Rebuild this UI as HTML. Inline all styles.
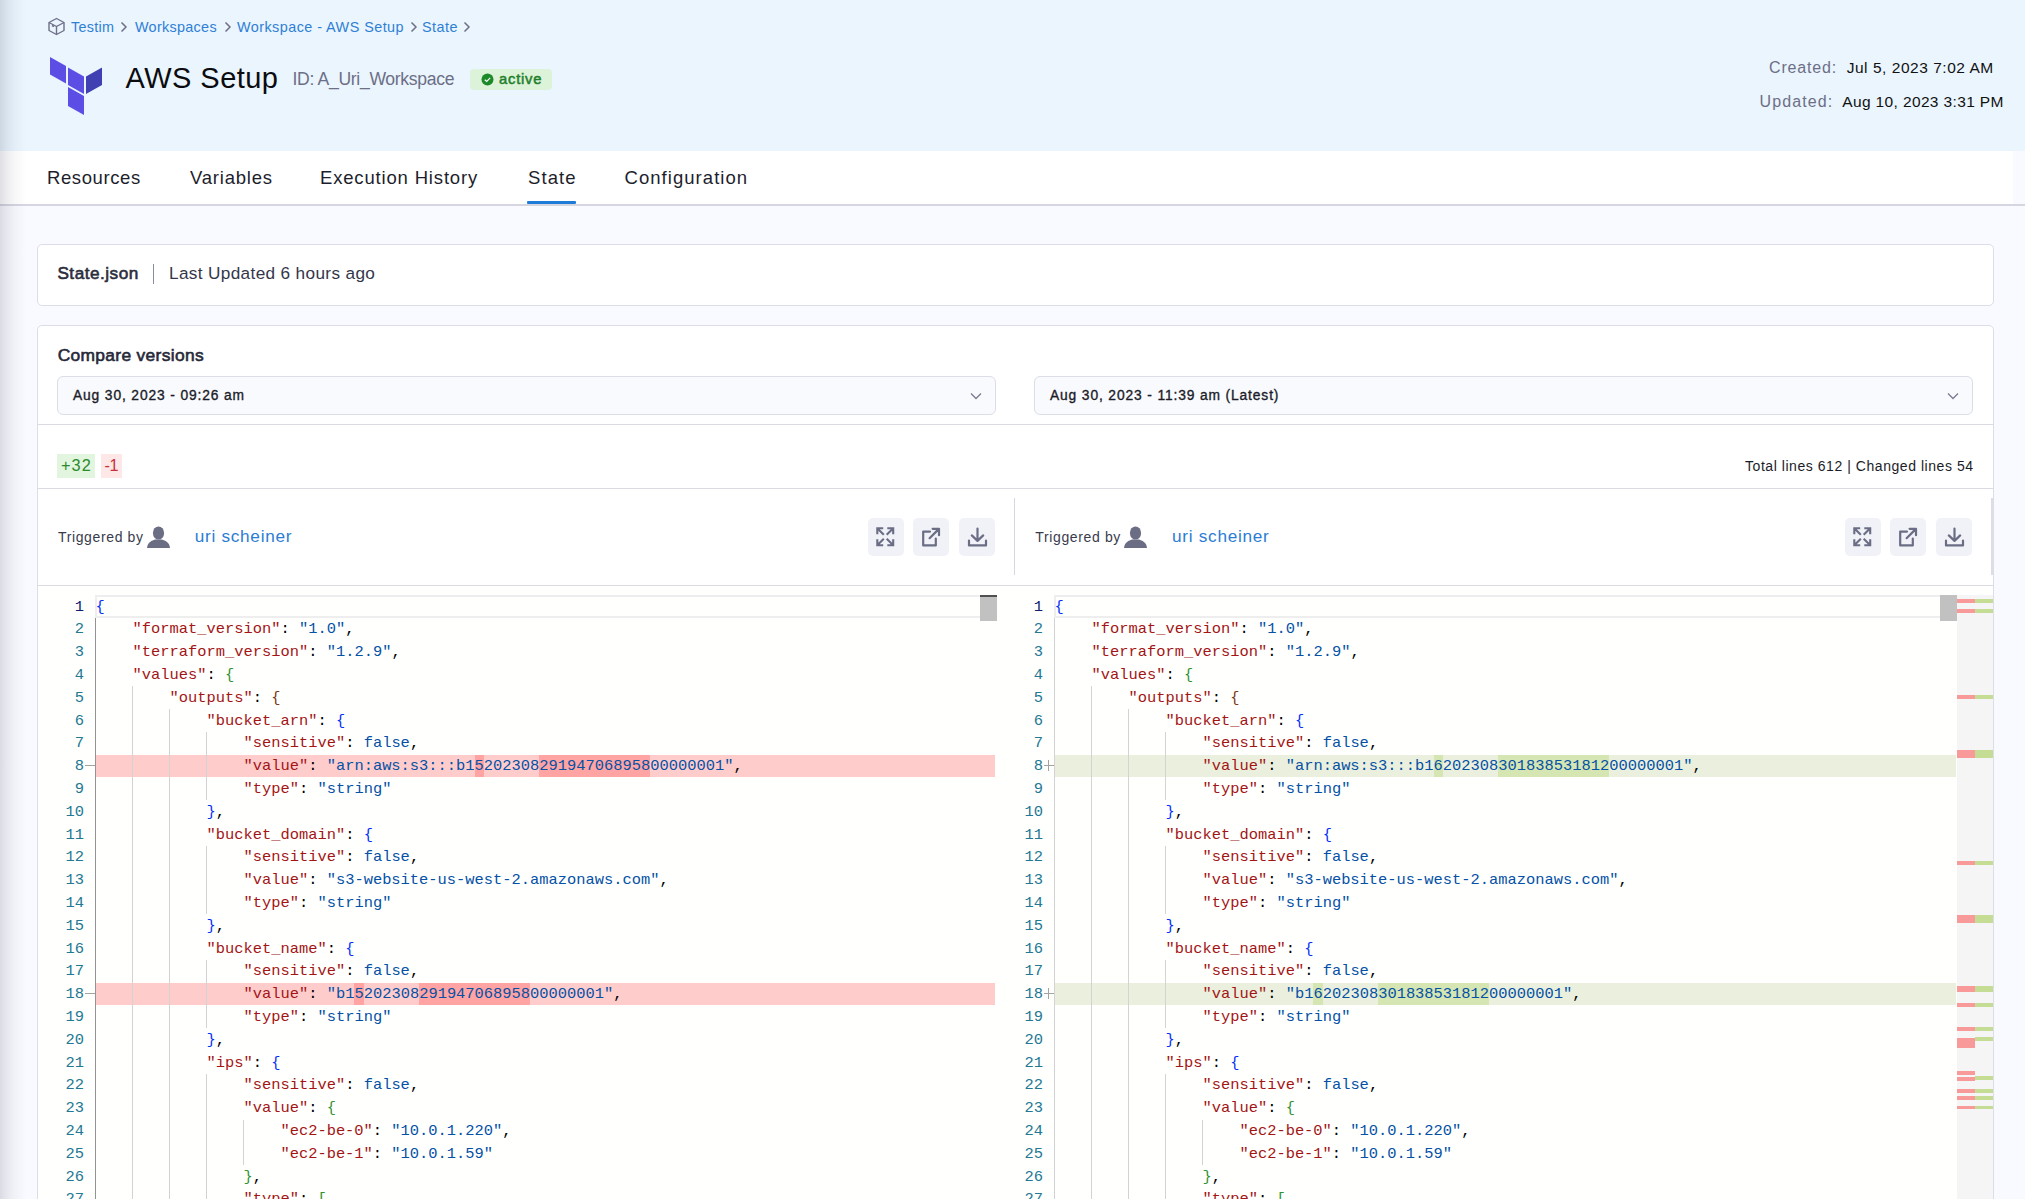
<!DOCTYPE html>
<html><head><meta charset="utf-8"><style>
*{box-sizing:border-box}
html,body{margin:0;padding:0;width:2025px;height:1199px;overflow:hidden;background:#F9FAFF;font-family:"Liberation Sans",sans-serif;position:relative}
.t{position:absolute;white-space:nowrap;line-height:1}
.abs{position:absolute}
#hdr{position:absolute;left:0;top:0;width:2025px;height:151px;background:#EAF5FE}
#tabs{position:absolute;left:0;top:151px;width:2013px;height:53px;background:#fff}
#tabline{position:absolute;left:0;top:204px;width:2025px;height:2px;background:#D6D6E2}
#shadow{position:absolute;left:0;top:0;width:26px;height:1199px;background:linear-gradient(to right,rgba(40,45,70,0.15),rgba(40,45,70,0.09) 25%,rgba(40,45,70,0.04) 55%,rgba(40,45,70,0) 100%)}
.card{position:absolute;background:#fff;border:1px solid #DDDDEA;border-radius:5px}
.hr{position:absolute;height:1px;background:#D9DAE2}
.sel{position:absolute;background:#F9FAFE;border:1.5px solid #DCDDE6;border-radius:6px}
.btn{position:absolute;width:36px;height:38px;background:#F1F2F8;border-radius:5px}
.ln{position:absolute;width:46px;text-align:right;font-family:"Liberation Mono",monospace;font-size:15.42px;line-height:22.8px;color:#237893;white-space:nowrap}
.ln.cur{color:#0B216F}
.cl{position:absolute;font-family:"Liberation Mono",monospace;font-size:15.42px;line-height:22.8px;white-space:pre;color:#000}
.mk{position:absolute;width:11px;text-align:center;font-family:"Liberation Mono",monospace;font-size:15px;line-height:22.8px;color:#777}
.k{color:#A31515}.s{color:#0451A5}.kw{color:#0451A5}.p{color:#000}
.b1{color:#0431FA}.b2{color:#319331}.b3{color:#7B3814}
.del{position:absolute;height:22.8px;background:#FFCCCC}
.ins{position:absolute;height:22.8px;background:#EAF0DD}
.del ~ .cl .hl{}
.ig{position:absolute;width:1px;background:#D3D3D3}
.ig.act{background:#939393}
.curline{position:absolute;height:22.8px;border-top:2px solid #EEEEEE;border-bottom:2px solid #EEEEEE;border-left:2px solid #EEEEEE}
.slider{position:absolute;width:17px;height:26px;background:#C1C1C1}
.slider.dk{border-top:2px solid #505050}

.hl{padding:2.2px 0 2.17px}
.L .hl{background:#FFA3A3}
.R .hl{background:#D5E6B3}

</style></head><body>
<div id="hdr"></div>
<div id="tabs"></div>
<div id="tabline"></div>
<svg class="abs" style="left:47px;top:17px" width="19" height="19" viewBox="0 0 19 19"><g fill="none" stroke="#6E7087" stroke-width="1.4" stroke-linejoin="round"><path d="M9.5 1.5 L17 5.5 L17 13.5 L9.5 17.5 L2 13.5 L2 5.5 Z"/><path d="M2 5.5 L9.5 9.5 L17 5.5 M9.5 9.5 L9.5 17.5"/><path d="M5 8.5 L7 9.5"/></g></svg>
<div class="t" style="left:71.00px;top:19.81px;font-size:14.4px;color:#2F80D5;font-weight:400;letter-spacing:0.3px;">Testim</div>
<div class="t" style="left:135.00px;top:19.81px;font-size:14.4px;color:#2F80D5;font-weight:400;letter-spacing:0.3px;">Workspaces</div>
<div class="t" style="left:237.00px;top:19.81px;font-size:14.4px;color:#2F80D5;font-weight:400;letter-spacing:0.45px;">Workspace - AWS Setup</div>
<div class="t" style="left:422.00px;top:19.81px;font-size:14.4px;color:#2F80D5;font-weight:400;letter-spacing:0.45px;">State</div>
<svg class="abs" style="left:119px;top:21px" width="10" height="12" viewBox="0 0 10 12"><path d="M2.5 1.5 L7 6 L2.5 10.5" fill="none" stroke="#6E7087" stroke-width="1.5"/></svg>
<svg class="abs" style="left:223px;top:21px" width="10" height="12" viewBox="0 0 10 12"><path d="M2.5 1.5 L7 6 L2.5 10.5" fill="none" stroke="#6E7087" stroke-width="1.5"/></svg>
<svg class="abs" style="left:409px;top:21px" width="10" height="12" viewBox="0 0 10 12"><path d="M2.5 1.5 L7 6 L2.5 10.5" fill="none" stroke="#6E7087" stroke-width="1.5"/></svg>
<svg class="abs" style="left:462px;top:21px" width="10" height="12" viewBox="0 0 10 12"><path d="M2.5 1.5 L7 6 L2.5 10.5" fill="none" stroke="#6E7087" stroke-width="1.5"/></svg>
<svg class="abs" style="left:49px;top:56px" width="54" height="60" viewBox="0 0 54 60"><g fill="#5C4EE5"><path d="M1 1 L17 10 L17 27.5 L1 18.5 Z"/><path d="M19 11.5 L35 20.5 L35 38 L19 29 Z"/><path d="M19 31 L35 40 L35 59 L19 50 Z"/></g><path d="M37 20.5 L53 11.5 L53 29 L37 38 Z" fill="#4040B2"/></svg>
<div class="t" style="left:125.50px;top:64.05px;font-size:29px;color:#0B0B10;font-weight:400;letter-spacing:0.45px;">AWS Setup</div>
<div class="t" style="left:292.50px;top:71.10px;font-size:17.6px;color:#6D6F86;font-weight:400;letter-spacing:-0.33px;">ID: A_Uri_Workspace</div>
<div class="abs" style="left:470px;top:69px;width:82px;height:21px;background:#DDF3D9;border-radius:4px"></div>
<svg class="abs" style="left:481px;top:73px" width="13" height="13" viewBox="0 0 13 13"><circle cx="6.5" cy="6.5" r="6" fill="#1D8A2A"/><path d="M3.8 6.7 L5.7 8.5 L9.2 4.8" fill="none" stroke="#fff" stroke-width="1.2"/></svg>
<div class="t" style="left:499.00px;top:71.97px;font-size:14.8px;color:#1E7F2B;font-weight:400;letter-spacing:0.75px;-webkit-text-stroke:0.5px #1E7F2B">active</div>
<div class="t" style="left:1769.00px;top:60.06px;font-size:16px;color:#6D6F86;font-weight:400;letter-spacing:0.85px;">Created:</div>
<div class="t" style="left:1846.70px;top:60.48px;font-size:15.5px;color:#111;font-weight:400;letter-spacing:0.53px;">Jul 5, 2023 7:02 AM</div>
<div class="t" style="left:1759.50px;top:93.76px;font-size:16px;color:#6D6F86;font-weight:400;letter-spacing:1.1px;">Updated:</div>
<div class="t" style="left:1842.30px;top:94.18px;font-size:15.5px;color:#111;font-weight:400;letter-spacing:0.36px;">Aug 10, 2023 3:31 PM</div>
<div class="t" style="left:47.00px;top:168.54px;font-size:18.5px;color:#1D1E2C;font-weight:400;letter-spacing:0.6px;">Resources</div>
<div class="t" style="left:190.00px;top:168.54px;font-size:18.5px;color:#1D1E2C;font-weight:400;letter-spacing:0.78px;">Variables</div>
<div class="t" style="left:320.00px;top:168.54px;font-size:18.5px;color:#1D1E2C;font-weight:400;letter-spacing:0.83px;">Execution History</div>
<div class="t" style="left:528.00px;top:168.54px;font-size:18.5px;color:#1D1E2C;font-weight:400;letter-spacing:1.1px;">State</div>
<div class="t" style="left:624.50px;top:168.54px;font-size:18.5px;color:#1D1E2C;font-weight:400;letter-spacing:1.05px;">Configuration</div>
<div class="abs" style="left:527px;top:201px;width:49px;height:3px;background:#1F7BD8;border-radius:1px"></div>
<div class="card" style="left:37px;top:244px;width:1957px;height:62px"></div>
<div class="t" style="left:57.40px;top:265.14px;font-size:17.2px;color:#2B2D3C;font-weight:400;letter-spacing:0.5px;-webkit-text-stroke:0.6px #2B2D3C">State.json</div>
<div class="abs" style="left:153px;top:264px;width:1px;height:20px;background:#8A8CA0"></div>
<div class="t" style="left:169.00px;top:265.44px;font-size:17.2px;color:#34364A;font-weight:400;letter-spacing:0.35px;">Last Updated 6 hours ago</div>
<div class="card" style="left:37px;top:325px;width:1957px;height:1000px"></div>
<div class="t" style="left:57.70px;top:346.57px;font-size:17.4px;color:#262838;font-weight:400;letter-spacing:0.32px;-webkit-text-stroke:0.6px #262838">Compare versions</div>
<div class="sel" style="left:57px;top:376px;width:939px;height:39px"></div>
<div class="sel" style="left:1034px;top:376px;width:939px;height:39px"></div>
<div class="t" style="left:73.00px;top:388.72px;font-size:13.8px;color:#1B1C28;font-weight:400;letter-spacing:0.87px;-webkit-text-stroke:0.35px #1B1C28">Aug 30, 2023 - 09:26 am</div>
<div class="t" style="left:1050.00px;top:388.72px;font-size:13.8px;color:#1B1C28;font-weight:400;letter-spacing:0.87px;-webkit-text-stroke:0.35px #1B1C28">Aug 30, 2023 - 11:39 am (Latest)</div>
<svg class="abs" style="left:970px;top:391.7px" width="12" height="8" viewBox="0 0 12 8"><path d="M1 1.5 L6 6.5 L11 1.5" fill="none" stroke="#7A7C90" stroke-width="1.25"/></svg>
<svg class="abs" style="left:1947px;top:391.7px" width="12" height="8" viewBox="0 0 12 8"><path d="M1 1.5 L6 6.5 L11 1.5" fill="none" stroke="#7A7C90" stroke-width="1.25"/></svg>
<div class="hr" style="left:38px;top:424px;width:1955px"></div>
<div class="abs" style="left:57px;top:454px;width:38px;height:24px;background:#E1F5DF"></div>
<div class="abs" style="left:101px;top:454px;width:21px;height:24px;background:#FDE7E7"></div>
<div class="t" style="left:61.00px;top:456.60px;font-size:16.3px;color:#2C8A2C;font-weight:400;letter-spacing:1.1px;">+32</div>
<div class="t" style="left:104.50px;top:456.60px;font-size:16.3px;color:#C8313A;font-weight:400;letter-spacing:-0.5px;">-1</div>
<div class="t" style="left:1745.00px;top:458.85px;font-size:14px;color:#1B1C28;font-weight:400;letter-spacing:0.55px;">Total lines 612 | Changed lines 54</div>
<div class="hr" style="left:38px;top:488px;width:1955px"></div>
<div class="t" style="left:58.00px;top:530.15px;font-size:14px;color:#393B4D;font-weight:400;letter-spacing:0.63px;">Triggered by</div>
<svg class="abs" style="left:147px;top:526px" width="23" height="22" viewBox="0 0 23 22"><ellipse cx="11.5" cy="7" rx="5.6" ry="6.6" fill="#6B6D85"/><path d="M0 22 C0.5 16 5 14.5 8 13.5 L15 13.5 C18 14.5 22.5 16 23 22 Z" fill="#6B6D85"/></svg>
<div class="t" style="left:194.70px;top:528.44px;font-size:17.2px;color:#2B7CD3;font-weight:400;letter-spacing:0.72px;">uri scheiner</div>
<div class="t" style="left:1035.30px;top:530.15px;font-size:14px;color:#393B4D;font-weight:400;letter-spacing:0.63px;">Triggered by</div>
<svg class="abs" style="left:1124.3px;top:526px" width="23" height="22" viewBox="0 0 23 22"><ellipse cx="11.5" cy="7" rx="5.6" ry="6.6" fill="#6B6D85"/><path d="M0 22 C0.5 16 5 14.5 8 13.5 L15 13.5 C18 14.5 22.5 16 23 22 Z" fill="#6B6D85"/></svg>
<div class="t" style="left:1172.00px;top:528.44px;font-size:17.2px;color:#2B7CD3;font-weight:400;letter-spacing:0.72px;">uri scheiner</div>
<div class="btn" style="left:868px;top:518px"></div>
<div class="btn" style="left:913px;top:518px"></div>
<div class="btn" style="left:959px;top:518px"></div>
<svg class="abs" style="left:876px;top:526.5px" width="20" height="21" viewBox="0 0 20 21"><g fill="none" stroke="#6B6D85" stroke-width="2.1" stroke-linecap="butt"><path d="M1.3 7.2 V1.3 H7.2 M2 2 L7.8 7.8"/><path d="M11.3 1.3 H17.2 V7.2 M16.5 2 L10.7 7.8"/><path d="M1.3 12.3 V18.2 H7.2 M2 17.5 L7.8 11.7"/><path d="M11.3 18.2 H17.2 V12.3 M16.5 17.5 L10.7 11.7"/></g></svg>
<svg class="abs" style="left:921px;top:526.5px" width="21" height="21" viewBox="0 0 21 21"><g fill="none" stroke="#6B6D85" stroke-width="2.2" stroke-linecap="round" stroke-linejoin="round"><path d="M9 4.6 H2.2 V18.4 H14.8 V11.5"/><path d="M8.6 11.2 L17.4 2.4 M11.6 1.8 H18 V8.2"/></g></svg>
<svg class="abs" style="left:966.5px;top:526.5px" width="21" height="21" viewBox="0 0 21 21"><g fill="none" stroke="#6B6D85" stroke-width="2.2" stroke-linecap="round" stroke-linejoin="round"><path d="M10.5 1.5 V13.5 M4.8 8.4 L10.5 13.9 L16.2 8.4"/><path d="M2 13.5 V18.4 H19 V13.5"/></g></svg>
<div class="btn" style="left:1845px;top:518px"></div>
<div class="btn" style="left:1890px;top:518px"></div>
<div class="btn" style="left:1936px;top:518px"></div>
<svg class="abs" style="left:1853px;top:526.5px" width="20" height="21" viewBox="0 0 20 21"><g fill="none" stroke="#6B6D85" stroke-width="2.1" stroke-linecap="butt"><path d="M1.3 7.2 V1.3 H7.2 M2 2 L7.8 7.8"/><path d="M11.3 1.3 H17.2 V7.2 M16.5 2 L10.7 7.8"/><path d="M1.3 12.3 V18.2 H7.2 M2 17.5 L7.8 11.7"/><path d="M11.3 18.2 H17.2 V12.3 M16.5 17.5 L10.7 11.7"/></g></svg>
<svg class="abs" style="left:1898px;top:526.5px" width="21" height="21" viewBox="0 0 21 21"><g fill="none" stroke="#6B6D85" stroke-width="2.2" stroke-linecap="round" stroke-linejoin="round"><path d="M9 4.6 H2.2 V18.4 H14.8 V11.5"/><path d="M8.6 11.2 L17.4 2.4 M11.6 1.8 H18 V8.2"/></g></svg>
<svg class="abs" style="left:1943.5px;top:526.5px" width="21" height="21" viewBox="0 0 21 21"><g fill="none" stroke="#6B6D85" stroke-width="2.2" stroke-linecap="round" stroke-linejoin="round"><path d="M10.5 1.5 V13.5 M4.8 8.4 L10.5 13.9 L16.2 8.4"/><path d="M2 13.5 V18.4 H19 V13.5"/></g></svg>
<div class="abs" style="left:1014px;top:498px;width:1px;height:77px;background:#D6D7E0"></div>
<div class="abs" style="left:1991px;top:498px;width:2px;height:77px;background:#DCDDE6"></div>
<div class="hr" style="left:38px;top:585px;width:1955px"></div>
<div class="abs" style="left:38px;top:586px;width:1955px;height:613px;background:#FFFFFE"></div>
<div class="abs" style="left:1957px;top:595px;width:36px;height:604px;background:#F5F5F5"></div>
<div class="abs" style="left:1957px;top:599px;width:18px;height:3.7px;background:#F99A9A"></div>
<div class="abs" style="left:1975px;top:599px;width:18px;height:3.7px;background:#C5DC94"></div>
<div class="abs" style="left:1957px;top:609px;width:18px;height:3.7px;background:#F99A9A"></div>
<div class="abs" style="left:1975px;top:609px;width:18px;height:3.7px;background:#C5DC94"></div>
<div class="abs" style="left:1957px;top:695px;width:18px;height:3.7px;background:#F99A9A"></div>
<div class="abs" style="left:1975px;top:695px;width:18px;height:3.7px;background:#C5DC94"></div>
<div class="abs" style="left:1957px;top:750px;width:18px;height:7.7px;background:#F99A9A"></div>
<div class="abs" style="left:1975px;top:750px;width:18px;height:7.7px;background:#C5DC94"></div>
<div class="abs" style="left:1957px;top:861px;width:18px;height:3.8px;background:#F99A9A"></div>
<div class="abs" style="left:1975px;top:861px;width:18px;height:3.8px;background:#C5DC94"></div>
<div class="abs" style="left:1957px;top:915.2px;width:18px;height:7.5px;background:#F99A9A"></div>
<div class="abs" style="left:1975px;top:915.2px;width:18px;height:7.5px;background:#C5DC94"></div>
<div class="abs" style="left:1957px;top:986.2px;width:18px;height:5.6px;background:#F99A9A"></div>
<div class="abs" style="left:1975px;top:986.2px;width:18px;height:5.6px;background:#C5DC94"></div>
<div class="abs" style="left:1957px;top:1003px;width:18px;height:3.7px;background:#F99A9A"></div>
<div class="abs" style="left:1975px;top:1003px;width:18px;height:3.7px;background:#C5DC94"></div>
<div class="abs" style="left:1957px;top:1027px;width:18px;height:3.8px;background:#F99A9A"></div>
<div class="abs" style="left:1975px;top:1027px;width:18px;height:3.8px;background:#C5DC94"></div>
<div class="abs" style="left:1957px;top:1038px;width:18px;height:9.8px;background:#F99A9A"></div>
<div class="abs" style="left:1975px;top:1036.9px;width:18px;height:3.9px;background:#C5DC94"></div>
<div class="abs" style="left:1957px;top:1071.2px;width:18px;height:3.8px;background:#F99A9A"></div>
<div class="abs" style="left:1957px;top:1077px;width:18px;height:3.8px;background:#F99A9A"></div>
<div class="abs" style="left:1975px;top:1076px;width:18px;height:3.8px;background:#C5DC94"></div>
<div class="abs" style="left:1957px;top:1089px;width:18px;height:3.7px;background:#F99A9A"></div>
<div class="abs" style="left:1975px;top:1089px;width:18px;height:3.7px;background:#C5DC94"></div>
<div class="abs" style="left:1957px;top:1096px;width:18px;height:3.7px;background:#F99A9A"></div>
<div class="abs" style="left:1975px;top:1096px;width:18px;height:3.7px;background:#C5DC94"></div>
<div class="abs" style="left:1957px;top:1105.8px;width:18px;height:3.7px;background:#F99A9A"></div>
<div class="abs" style="left:1975px;top:1105.8px;width:18px;height:3.7px;background:#C5DC94"></div>
<div id="shadow"></div>
<div id="editors">
<div class="ln cur" style="left:38px;top:595.60px">1</div>
<div class="cl L" style="left:95.5px;top:595.60px"><span class="b1">{</span></div>
<div class="ln" style="left:38px;top:618.40px">2</div>
<div class="cl L" style="left:95.5px;top:618.40px">&nbsp;&nbsp;&nbsp;&nbsp;<span class="k">"format_version"</span><span class="p">: </span><span class="s">"1.0"</span><span class="p">,</span></div>
<div class="ln" style="left:38px;top:641.20px">3</div>
<div class="cl L" style="left:95.5px;top:641.20px">&nbsp;&nbsp;&nbsp;&nbsp;<span class="k">"terraform_version"</span><span class="p">: </span><span class="s">"1.2.9"</span><span class="p">,</span></div>
<div class="ln" style="left:38px;top:664.00px">4</div>
<div class="cl L" style="left:95.5px;top:664.00px">&nbsp;&nbsp;&nbsp;&nbsp;<span class="k">"values"</span><span class="p">: </span><span class="b2">{</span></div>
<div class="ln" style="left:38px;top:686.80px">5</div>
<div class="cl L" style="left:95.5px;top:686.80px">&nbsp;&nbsp;&nbsp;&nbsp;&nbsp;&nbsp;&nbsp;&nbsp;<span class="k">"outputs"</span><span class="p">: </span><span class="b3">{</span></div>
<div class="ln" style="left:38px;top:709.60px">6</div>
<div class="cl L" style="left:95.5px;top:709.60px">&nbsp;&nbsp;&nbsp;&nbsp;&nbsp;&nbsp;&nbsp;&nbsp;&nbsp;&nbsp;&nbsp;&nbsp;<span class="k">"bucket_arn"</span><span class="p">: </span><span class="b1">{</span></div>
<div class="ln" style="left:38px;top:732.40px">7</div>
<div class="cl L" style="left:95.5px;top:732.40px">&nbsp;&nbsp;&nbsp;&nbsp;&nbsp;&nbsp;&nbsp;&nbsp;&nbsp;&nbsp;&nbsp;&nbsp;&nbsp;&nbsp;&nbsp;&nbsp;<span class="k">"sensitive"</span><span class="p">: </span><span class="kw">false</span><span class="p">,</span></div>
<div class="ln" style="left:38px;top:755.20px">8</div>
<div class="del" style="left:95px;top:754.70px;width:900px"></div>
<div class="abs" style="left:84.5px;top:764.90px;width:11px;height:1.5px;background:#A3A3A3"></div>
<div class="cl L" style="left:95.5px;top:755.20px">&nbsp;&nbsp;&nbsp;&nbsp;&nbsp;&nbsp;&nbsp;&nbsp;&nbsp;&nbsp;&nbsp;&nbsp;&nbsp;&nbsp;&nbsp;&nbsp;<span class="k">"value"</span><span class="p">: </span><span class="s">"arn:aws:s3:::b1</span><span class="s hl">5</span><span class="s">202308</span><span class="s hl">291947068958</span><span class="s">00000001"</span><span class="p">,</span></div>
<div class="ln" style="left:38px;top:778.00px">9</div>
<div class="cl L" style="left:95.5px;top:778.00px">&nbsp;&nbsp;&nbsp;&nbsp;&nbsp;&nbsp;&nbsp;&nbsp;&nbsp;&nbsp;&nbsp;&nbsp;&nbsp;&nbsp;&nbsp;&nbsp;<span class="k">"type"</span><span class="p">: </span><span class="s">"string"</span></div>
<div class="ln" style="left:38px;top:800.80px">10</div>
<div class="cl L" style="left:95.5px;top:800.80px">&nbsp;&nbsp;&nbsp;&nbsp;&nbsp;&nbsp;&nbsp;&nbsp;&nbsp;&nbsp;&nbsp;&nbsp;<span class="b1">}</span><span class="p">,</span></div>
<div class="ln" style="left:38px;top:823.60px">11</div>
<div class="cl L" style="left:95.5px;top:823.60px">&nbsp;&nbsp;&nbsp;&nbsp;&nbsp;&nbsp;&nbsp;&nbsp;&nbsp;&nbsp;&nbsp;&nbsp;<span class="k">"bucket_domain"</span><span class="p">: </span><span class="b1">{</span></div>
<div class="ln" style="left:38px;top:846.40px">12</div>
<div class="cl L" style="left:95.5px;top:846.40px">&nbsp;&nbsp;&nbsp;&nbsp;&nbsp;&nbsp;&nbsp;&nbsp;&nbsp;&nbsp;&nbsp;&nbsp;&nbsp;&nbsp;&nbsp;&nbsp;<span class="k">"sensitive"</span><span class="p">: </span><span class="kw">false</span><span class="p">,</span></div>
<div class="ln" style="left:38px;top:869.20px">13</div>
<div class="cl L" style="left:95.5px;top:869.20px">&nbsp;&nbsp;&nbsp;&nbsp;&nbsp;&nbsp;&nbsp;&nbsp;&nbsp;&nbsp;&nbsp;&nbsp;&nbsp;&nbsp;&nbsp;&nbsp;<span class="k">"value"</span><span class="p">: </span><span class="s">"s3-website-us-west-2.amazonaws.com"</span><span class="p">,</span></div>
<div class="ln" style="left:38px;top:892.00px">14</div>
<div class="cl L" style="left:95.5px;top:892.00px">&nbsp;&nbsp;&nbsp;&nbsp;&nbsp;&nbsp;&nbsp;&nbsp;&nbsp;&nbsp;&nbsp;&nbsp;&nbsp;&nbsp;&nbsp;&nbsp;<span class="k">"type"</span><span class="p">: </span><span class="s">"string"</span></div>
<div class="ln" style="left:38px;top:914.80px">15</div>
<div class="cl L" style="left:95.5px;top:914.80px">&nbsp;&nbsp;&nbsp;&nbsp;&nbsp;&nbsp;&nbsp;&nbsp;&nbsp;&nbsp;&nbsp;&nbsp;<span class="b1">}</span><span class="p">,</span></div>
<div class="ln" style="left:38px;top:937.60px">16</div>
<div class="cl L" style="left:95.5px;top:937.60px">&nbsp;&nbsp;&nbsp;&nbsp;&nbsp;&nbsp;&nbsp;&nbsp;&nbsp;&nbsp;&nbsp;&nbsp;<span class="k">"bucket_name"</span><span class="p">: </span><span class="b1">{</span></div>
<div class="ln" style="left:38px;top:960.40px">17</div>
<div class="cl L" style="left:95.5px;top:960.40px">&nbsp;&nbsp;&nbsp;&nbsp;&nbsp;&nbsp;&nbsp;&nbsp;&nbsp;&nbsp;&nbsp;&nbsp;&nbsp;&nbsp;&nbsp;&nbsp;<span class="k">"sensitive"</span><span class="p">: </span><span class="kw">false</span><span class="p">,</span></div>
<div class="ln" style="left:38px;top:983.20px">18</div>
<div class="del" style="left:95px;top:982.70px;width:900px"></div>
<div class="abs" style="left:84.5px;top:992.90px;width:11px;height:1.5px;background:#A3A3A3"></div>
<div class="cl L" style="left:95.5px;top:983.20px">&nbsp;&nbsp;&nbsp;&nbsp;&nbsp;&nbsp;&nbsp;&nbsp;&nbsp;&nbsp;&nbsp;&nbsp;&nbsp;&nbsp;&nbsp;&nbsp;<span class="k">"value"</span><span class="p">: </span><span class="s">"b1</span><span class="s hl">5</span><span class="s">202308</span><span class="s hl">291947068958</span><span class="s">00000001"</span><span class="p">,</span></div>
<div class="ln" style="left:38px;top:1006.00px">19</div>
<div class="cl L" style="left:95.5px;top:1006.00px">&nbsp;&nbsp;&nbsp;&nbsp;&nbsp;&nbsp;&nbsp;&nbsp;&nbsp;&nbsp;&nbsp;&nbsp;&nbsp;&nbsp;&nbsp;&nbsp;<span class="k">"type"</span><span class="p">: </span><span class="s">"string"</span></div>
<div class="ln" style="left:38px;top:1028.80px">20</div>
<div class="cl L" style="left:95.5px;top:1028.80px">&nbsp;&nbsp;&nbsp;&nbsp;&nbsp;&nbsp;&nbsp;&nbsp;&nbsp;&nbsp;&nbsp;&nbsp;<span class="b1">}</span><span class="p">,</span></div>
<div class="ln" style="left:38px;top:1051.60px">21</div>
<div class="cl L" style="left:95.5px;top:1051.60px">&nbsp;&nbsp;&nbsp;&nbsp;&nbsp;&nbsp;&nbsp;&nbsp;&nbsp;&nbsp;&nbsp;&nbsp;<span class="k">"ips"</span><span class="p">: </span><span class="b1">{</span></div>
<div class="ln" style="left:38px;top:1074.40px">22</div>
<div class="cl L" style="left:95.5px;top:1074.40px">&nbsp;&nbsp;&nbsp;&nbsp;&nbsp;&nbsp;&nbsp;&nbsp;&nbsp;&nbsp;&nbsp;&nbsp;&nbsp;&nbsp;&nbsp;&nbsp;<span class="k">"sensitive"</span><span class="p">: </span><span class="kw">false</span><span class="p">,</span></div>
<div class="ln" style="left:38px;top:1097.20px">23</div>
<div class="cl L" style="left:95.5px;top:1097.20px">&nbsp;&nbsp;&nbsp;&nbsp;&nbsp;&nbsp;&nbsp;&nbsp;&nbsp;&nbsp;&nbsp;&nbsp;&nbsp;&nbsp;&nbsp;&nbsp;<span class="k">"value"</span><span class="p">: </span><span class="b2">{</span></div>
<div class="ln" style="left:38px;top:1120.00px">24</div>
<div class="cl L" style="left:95.5px;top:1120.00px">&nbsp;&nbsp;&nbsp;&nbsp;&nbsp;&nbsp;&nbsp;&nbsp;&nbsp;&nbsp;&nbsp;&nbsp;&nbsp;&nbsp;&nbsp;&nbsp;&nbsp;&nbsp;&nbsp;&nbsp;<span class="k">"ec2-be-0"</span><span class="p">: </span><span class="s">"10.0.1.220"</span><span class="p">,</span></div>
<div class="ln" style="left:38px;top:1142.80px">25</div>
<div class="cl L" style="left:95.5px;top:1142.80px">&nbsp;&nbsp;&nbsp;&nbsp;&nbsp;&nbsp;&nbsp;&nbsp;&nbsp;&nbsp;&nbsp;&nbsp;&nbsp;&nbsp;&nbsp;&nbsp;&nbsp;&nbsp;&nbsp;&nbsp;<span class="k">"ec2-be-1"</span><span class="p">: </span><span class="s">"10.0.1.59"</span></div>
<div class="ln" style="left:38px;top:1165.60px">26</div>
<div class="cl L" style="left:95.5px;top:1165.60px">&nbsp;&nbsp;&nbsp;&nbsp;&nbsp;&nbsp;&nbsp;&nbsp;&nbsp;&nbsp;&nbsp;&nbsp;&nbsp;&nbsp;&nbsp;&nbsp;<span class="b2">}</span><span class="p">,</span></div>
<div class="ln" style="left:38px;top:1188.40px">27</div>
<div class="cl L" style="left:95.5px;top:1188.40px">&nbsp;&nbsp;&nbsp;&nbsp;&nbsp;&nbsp;&nbsp;&nbsp;&nbsp;&nbsp;&nbsp;&nbsp;&nbsp;&nbsp;&nbsp;&nbsp;<span class="k">"type"</span><span class="p">: </span><span class="b2">[</span></div>
<div class="ig act" style="left:95.00px;top:617.90px;height:615.60px"></div>
<div class="ig" style="left:132.00px;top:686.30px;height:547.20px"></div>
<div class="ig" style="left:169.00px;top:709.10px;height:524.40px"></div>
<div class="ig" style="left:206.00px;top:731.90px;height:68.40px"></div>
<div class="ig" style="left:206.00px;top:845.90px;height:68.40px"></div>
<div class="ig" style="left:206.00px;top:959.90px;height:68.40px"></div>
<div class="ig" style="left:206.00px;top:1073.90px;height:159.60px"></div>
<div class="ig" style="left:243.00px;top:1119.50px;height:45.60px"></div>
<div class="curline" style="left:95px;top:595.10px;width:885px"></div>
<div class="slider dk" style="left:980px;top:595px"></div>
<div class="ln cur" style="left:997px;top:595.60px">1</div>
<div class="cl R" style="left:1054.5px;top:595.60px"><span class="b1">{</span></div>
<div class="ln" style="left:997px;top:618.40px">2</div>
<div class="cl R" style="left:1054.5px;top:618.40px">&nbsp;&nbsp;&nbsp;&nbsp;<span class="k">"format_version"</span><span class="p">: </span><span class="s">"1.0"</span><span class="p">,</span></div>
<div class="ln" style="left:997px;top:641.20px">3</div>
<div class="cl R" style="left:1054.5px;top:641.20px">&nbsp;&nbsp;&nbsp;&nbsp;<span class="k">"terraform_version"</span><span class="p">: </span><span class="s">"1.2.9"</span><span class="p">,</span></div>
<div class="ln" style="left:997px;top:664.00px">4</div>
<div class="cl R" style="left:1054.5px;top:664.00px">&nbsp;&nbsp;&nbsp;&nbsp;<span class="k">"values"</span><span class="p">: </span><span class="b2">{</span></div>
<div class="ln" style="left:997px;top:686.80px">5</div>
<div class="cl R" style="left:1054.5px;top:686.80px">&nbsp;&nbsp;&nbsp;&nbsp;&nbsp;&nbsp;&nbsp;&nbsp;<span class="k">"outputs"</span><span class="p">: </span><span class="b3">{</span></div>
<div class="ln" style="left:997px;top:709.60px">6</div>
<div class="cl R" style="left:1054.5px;top:709.60px">&nbsp;&nbsp;&nbsp;&nbsp;&nbsp;&nbsp;&nbsp;&nbsp;&nbsp;&nbsp;&nbsp;&nbsp;<span class="k">"bucket_arn"</span><span class="p">: </span><span class="b1">{</span></div>
<div class="ln" style="left:997px;top:732.40px">7</div>
<div class="cl R" style="left:1054.5px;top:732.40px">&nbsp;&nbsp;&nbsp;&nbsp;&nbsp;&nbsp;&nbsp;&nbsp;&nbsp;&nbsp;&nbsp;&nbsp;&nbsp;&nbsp;&nbsp;&nbsp;<span class="k">"sensitive"</span><span class="p">: </span><span class="kw">false</span><span class="p">,</span></div>
<div class="ln" style="left:997px;top:755.20px">8</div>
<div class="ins" style="left:1054px;top:754.70px;width:902px"></div>
<div class="abs" style="left:1043.5px;top:764.90px;width:10px;height:1.5px;background:#A3A3A3"></div>
<div class="abs" style="left:1047.8px;top:760.40px;width:1.5px;height:10.5px;background:#A3A3A3"></div>
<div class="cl R" style="left:1054.5px;top:755.20px">&nbsp;&nbsp;&nbsp;&nbsp;&nbsp;&nbsp;&nbsp;&nbsp;&nbsp;&nbsp;&nbsp;&nbsp;&nbsp;&nbsp;&nbsp;&nbsp;<span class="k">"value"</span><span class="p">: </span><span class="s">"arn:aws:s3:::b1</span><span class="s hl">6</span><span class="s">202308</span><span class="s hl">301838531812</span><span class="s">00000001"</span><span class="p">,</span></div>
<div class="ln" style="left:997px;top:778.00px">9</div>
<div class="cl R" style="left:1054.5px;top:778.00px">&nbsp;&nbsp;&nbsp;&nbsp;&nbsp;&nbsp;&nbsp;&nbsp;&nbsp;&nbsp;&nbsp;&nbsp;&nbsp;&nbsp;&nbsp;&nbsp;<span class="k">"type"</span><span class="p">: </span><span class="s">"string"</span></div>
<div class="ln" style="left:997px;top:800.80px">10</div>
<div class="cl R" style="left:1054.5px;top:800.80px">&nbsp;&nbsp;&nbsp;&nbsp;&nbsp;&nbsp;&nbsp;&nbsp;&nbsp;&nbsp;&nbsp;&nbsp;<span class="b1">}</span><span class="p">,</span></div>
<div class="ln" style="left:997px;top:823.60px">11</div>
<div class="cl R" style="left:1054.5px;top:823.60px">&nbsp;&nbsp;&nbsp;&nbsp;&nbsp;&nbsp;&nbsp;&nbsp;&nbsp;&nbsp;&nbsp;&nbsp;<span class="k">"bucket_domain"</span><span class="p">: </span><span class="b1">{</span></div>
<div class="ln" style="left:997px;top:846.40px">12</div>
<div class="cl R" style="left:1054.5px;top:846.40px">&nbsp;&nbsp;&nbsp;&nbsp;&nbsp;&nbsp;&nbsp;&nbsp;&nbsp;&nbsp;&nbsp;&nbsp;&nbsp;&nbsp;&nbsp;&nbsp;<span class="k">"sensitive"</span><span class="p">: </span><span class="kw">false</span><span class="p">,</span></div>
<div class="ln" style="left:997px;top:869.20px">13</div>
<div class="cl R" style="left:1054.5px;top:869.20px">&nbsp;&nbsp;&nbsp;&nbsp;&nbsp;&nbsp;&nbsp;&nbsp;&nbsp;&nbsp;&nbsp;&nbsp;&nbsp;&nbsp;&nbsp;&nbsp;<span class="k">"value"</span><span class="p">: </span><span class="s">"s3-website-us-west-2.amazonaws.com"</span><span class="p">,</span></div>
<div class="ln" style="left:997px;top:892.00px">14</div>
<div class="cl R" style="left:1054.5px;top:892.00px">&nbsp;&nbsp;&nbsp;&nbsp;&nbsp;&nbsp;&nbsp;&nbsp;&nbsp;&nbsp;&nbsp;&nbsp;&nbsp;&nbsp;&nbsp;&nbsp;<span class="k">"type"</span><span class="p">: </span><span class="s">"string"</span></div>
<div class="ln" style="left:997px;top:914.80px">15</div>
<div class="cl R" style="left:1054.5px;top:914.80px">&nbsp;&nbsp;&nbsp;&nbsp;&nbsp;&nbsp;&nbsp;&nbsp;&nbsp;&nbsp;&nbsp;&nbsp;<span class="b1">}</span><span class="p">,</span></div>
<div class="ln" style="left:997px;top:937.60px">16</div>
<div class="cl R" style="left:1054.5px;top:937.60px">&nbsp;&nbsp;&nbsp;&nbsp;&nbsp;&nbsp;&nbsp;&nbsp;&nbsp;&nbsp;&nbsp;&nbsp;<span class="k">"bucket_name"</span><span class="p">: </span><span class="b1">{</span></div>
<div class="ln" style="left:997px;top:960.40px">17</div>
<div class="cl R" style="left:1054.5px;top:960.40px">&nbsp;&nbsp;&nbsp;&nbsp;&nbsp;&nbsp;&nbsp;&nbsp;&nbsp;&nbsp;&nbsp;&nbsp;&nbsp;&nbsp;&nbsp;&nbsp;<span class="k">"sensitive"</span><span class="p">: </span><span class="kw">false</span><span class="p">,</span></div>
<div class="ln" style="left:997px;top:983.20px">18</div>
<div class="ins" style="left:1054px;top:982.70px;width:902px"></div>
<div class="abs" style="left:1043.5px;top:992.90px;width:10px;height:1.5px;background:#A3A3A3"></div>
<div class="abs" style="left:1047.8px;top:988.40px;width:1.5px;height:10.5px;background:#A3A3A3"></div>
<div class="cl R" style="left:1054.5px;top:983.20px">&nbsp;&nbsp;&nbsp;&nbsp;&nbsp;&nbsp;&nbsp;&nbsp;&nbsp;&nbsp;&nbsp;&nbsp;&nbsp;&nbsp;&nbsp;&nbsp;<span class="k">"value"</span><span class="p">: </span><span class="s">"b1</span><span class="s hl">6</span><span class="s">202308</span><span class="s hl">301838531812</span><span class="s">00000001"</span><span class="p">,</span></div>
<div class="ln" style="left:997px;top:1006.00px">19</div>
<div class="cl R" style="left:1054.5px;top:1006.00px">&nbsp;&nbsp;&nbsp;&nbsp;&nbsp;&nbsp;&nbsp;&nbsp;&nbsp;&nbsp;&nbsp;&nbsp;&nbsp;&nbsp;&nbsp;&nbsp;<span class="k">"type"</span><span class="p">: </span><span class="s">"string"</span></div>
<div class="ln" style="left:997px;top:1028.80px">20</div>
<div class="cl R" style="left:1054.5px;top:1028.80px">&nbsp;&nbsp;&nbsp;&nbsp;&nbsp;&nbsp;&nbsp;&nbsp;&nbsp;&nbsp;&nbsp;&nbsp;<span class="b1">}</span><span class="p">,</span></div>
<div class="ln" style="left:997px;top:1051.60px">21</div>
<div class="cl R" style="left:1054.5px;top:1051.60px">&nbsp;&nbsp;&nbsp;&nbsp;&nbsp;&nbsp;&nbsp;&nbsp;&nbsp;&nbsp;&nbsp;&nbsp;<span class="k">"ips"</span><span class="p">: </span><span class="b1">{</span></div>
<div class="ln" style="left:997px;top:1074.40px">22</div>
<div class="cl R" style="left:1054.5px;top:1074.40px">&nbsp;&nbsp;&nbsp;&nbsp;&nbsp;&nbsp;&nbsp;&nbsp;&nbsp;&nbsp;&nbsp;&nbsp;&nbsp;&nbsp;&nbsp;&nbsp;<span class="k">"sensitive"</span><span class="p">: </span><span class="kw">false</span><span class="p">,</span></div>
<div class="ln" style="left:997px;top:1097.20px">23</div>
<div class="cl R" style="left:1054.5px;top:1097.20px">&nbsp;&nbsp;&nbsp;&nbsp;&nbsp;&nbsp;&nbsp;&nbsp;&nbsp;&nbsp;&nbsp;&nbsp;&nbsp;&nbsp;&nbsp;&nbsp;<span class="k">"value"</span><span class="p">: </span><span class="b2">{</span></div>
<div class="ln" style="left:997px;top:1120.00px">24</div>
<div class="cl R" style="left:1054.5px;top:1120.00px">&nbsp;&nbsp;&nbsp;&nbsp;&nbsp;&nbsp;&nbsp;&nbsp;&nbsp;&nbsp;&nbsp;&nbsp;&nbsp;&nbsp;&nbsp;&nbsp;&nbsp;&nbsp;&nbsp;&nbsp;<span class="k">"ec2-be-0"</span><span class="p">: </span><span class="s">"10.0.1.220"</span><span class="p">,</span></div>
<div class="ln" style="left:997px;top:1142.80px">25</div>
<div class="cl R" style="left:1054.5px;top:1142.80px">&nbsp;&nbsp;&nbsp;&nbsp;&nbsp;&nbsp;&nbsp;&nbsp;&nbsp;&nbsp;&nbsp;&nbsp;&nbsp;&nbsp;&nbsp;&nbsp;&nbsp;&nbsp;&nbsp;&nbsp;<span class="k">"ec2-be-1"</span><span class="p">: </span><span class="s">"10.0.1.59"</span></div>
<div class="ln" style="left:997px;top:1165.60px">26</div>
<div class="cl R" style="left:1054.5px;top:1165.60px">&nbsp;&nbsp;&nbsp;&nbsp;&nbsp;&nbsp;&nbsp;&nbsp;&nbsp;&nbsp;&nbsp;&nbsp;&nbsp;&nbsp;&nbsp;&nbsp;<span class="b2">}</span><span class="p">,</span></div>
<div class="ln" style="left:997px;top:1188.40px">27</div>
<div class="cl R" style="left:1054.5px;top:1188.40px">&nbsp;&nbsp;&nbsp;&nbsp;&nbsp;&nbsp;&nbsp;&nbsp;&nbsp;&nbsp;&nbsp;&nbsp;&nbsp;&nbsp;&nbsp;&nbsp;<span class="k">"type"</span><span class="p">: </span><span class="b2">[</span></div>
<div class="ig" style="left:1054.00px;top:617.90px;height:615.60px"></div>
<div class="ig" style="left:1091.00px;top:686.30px;height:547.20px"></div>
<div class="ig" style="left:1128.00px;top:709.10px;height:524.40px"></div>
<div class="ig" style="left:1165.00px;top:731.90px;height:68.40px"></div>
<div class="ig" style="left:1165.00px;top:845.90px;height:68.40px"></div>
<div class="ig" style="left:1165.00px;top:959.90px;height:68.40px"></div>
<div class="ig" style="left:1165.00px;top:1073.90px;height:159.60px"></div>
<div class="ig" style="left:1202.00px;top:1119.50px;height:45.60px"></div>
<div class="curline" style="left:1054px;top:595.10px;width:886px"></div>
<div class="slider" style="left:1940px;top:595px"></div>
</div>
</body></html>
